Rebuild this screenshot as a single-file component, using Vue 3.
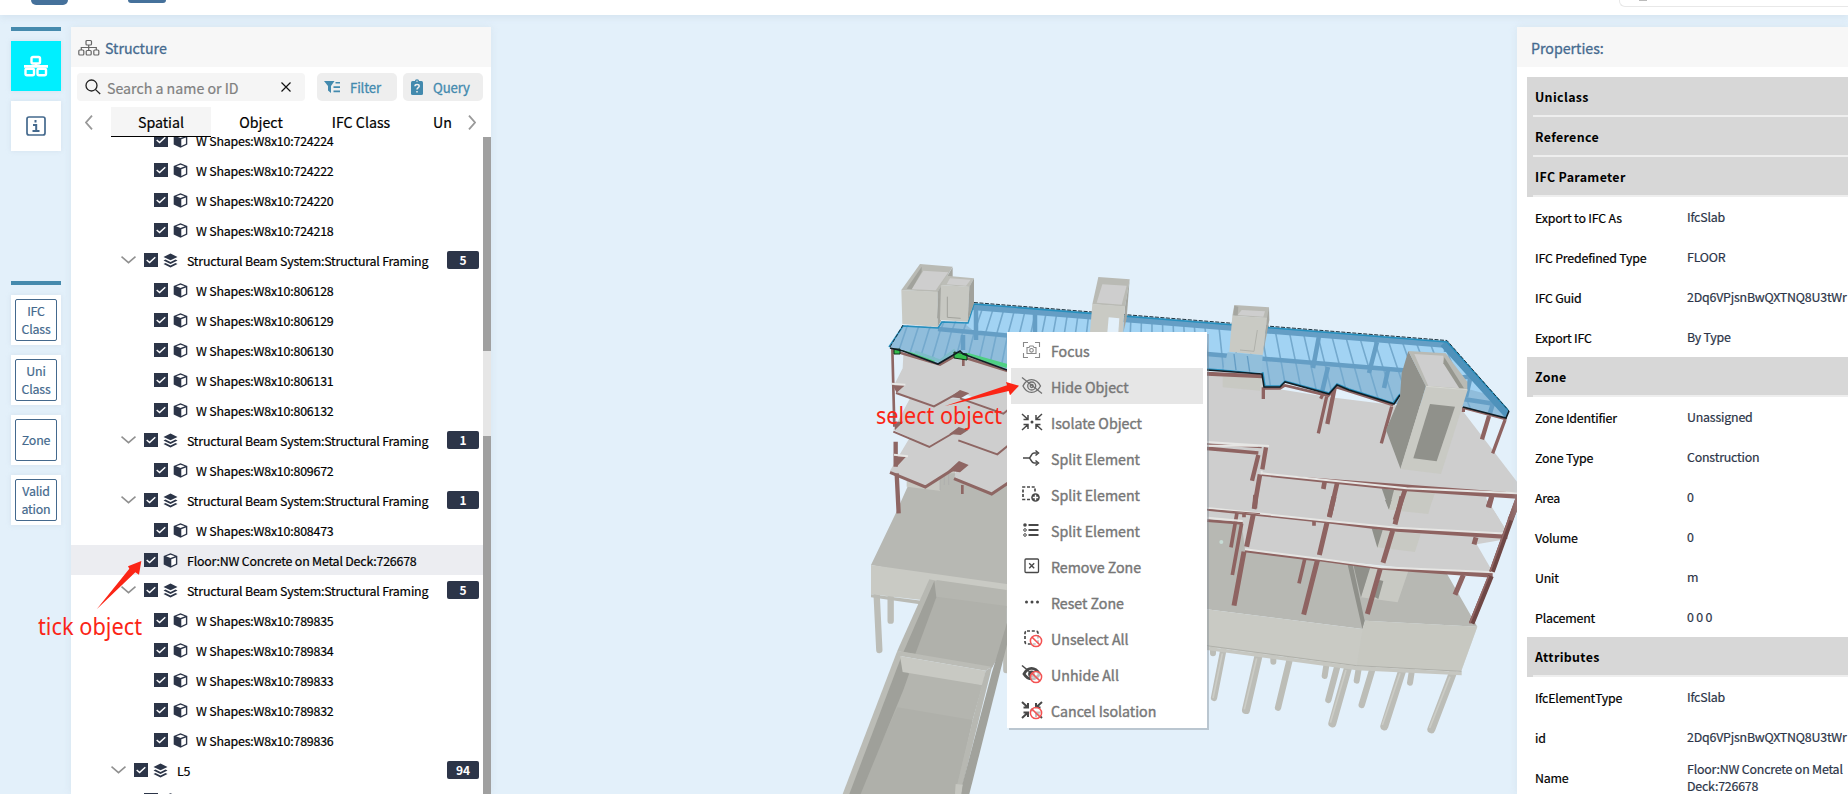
<script setup>
const leaf = (name) => ({ name: 'W Shapes:W8x10:' + name, kind: 'leaf' })
const beam = (count) => ({ name: 'Structural Beam System:Structural Framing', kind: 'group', count })
const rows = [
  leaf('724224'), leaf('724222'), leaf('724220'), leaf('724218'),
  beam(5), leaf('806128'), leaf('806129'), leaf('806130'), leaf('806131'), leaf('806132'),
  beam(1), leaf('809672'),
  beam(1), leaf('808473'),
  { name: 'Floor:NW Concrete on Metal Deck:726678', kind: 'floor' },
  beam(5), leaf('789835'), leaf('789834'), leaf('789833'), leaf('789832'), leaf('789836'),
  { name: 'L5', kind: 'storey', count: 94 },
  { name: '', kind: 'floor plain' },
]
const props = [
  ['Uniclass'], ['Reference'], ['IFC Parameter'],
  ['Export to IFC As', 'IfcSlab'], ['IFC Predefined Type', 'FLOOR'],
  ['IFC Guid', '2Dq6VPjsnBwQXTNQ8U3tWr'], ['Export IFC', 'By Type'],
  ['Zone'],
  ['Zone Identifier', 'Unassigned'], ['Zone Type', 'Construction'], ['Area', '0'],
  ['Volume', '0'], ['Unit', 'm'], ['Placement', '0 0 0'],
  ['Attributes'],
  ['IfcElementType', 'IfcSlab'], ['id', '2Dq6VPjsnBwQXTNQ8U3tWr'],
  ['Name', 'Floor:NW Concrete on Metal Deck:726678'],
]
const menu = [
  ['focus', 'Focus'], ['hide', 'Hide Object'], ['isolate', 'Isolate Object'],
  ['fork', 'Split Element'], ['add', 'Split Element'], ['list', 'Split Element'],
  ['remove', 'Remove Zone'], ['dots', 'Reset Zone'], ['unselect', 'Unselect All'],
  ['unhide', 'Unhide All'], ['cancel', 'Cancel Isolation'],
]
const tools = [['IFC', 'Class'], ['Uni', 'Class'], ['Zone'], ['Valid', 'ation']]

// roof joists fan out from left-leaning to right-leaning
const joists = []
for (let x = 900; x < 1450; x += x < 1200 ? 10.5 : 14) {
  const top = 303 + (x - 974) * 0.079
  const mid = 331 + (x - 950) * 0.109
  const lean = -12 + (x - 960) * 0.062
  joists.push([x, top, x + lean, mid, x + lean * 1.8, mid + 34])
}
</script>

<template>
  <div class="page">
    <svg class="scene" viewBox="0 0 1848 794" width="1848" height="794">
      <defs>
        <clipPath id="roofClip">
          <path d="M890 347 903 325 938 327 941 321 968 322 974 303 1447 341 1509 411 1506 418 1463 407 1394 404 1349 390 1337 385 1329 394 1285 382 1280 387 1264 387 1262 374 1207 370 1020 375 1007 370 963 354 960 351 938 364 903 351Z" />
        </clipPath>
      </defs>

      <!-- podium and ramp -->
      <g transform="translate(840 500) scale(.33333)">
        <path fill="none" stroke="#bcbdb7" stroke-width="19" stroke-linecap="round" d="M152 290V362M110 285 118 450M499 380V510" />
        <path fill="#b7b8b3" d="M93 195 168 38 205-45H560V270H500Z" />
        <path fill="#c9cac4" d="M93 195 500 252 560 260V330L245 300 93 283Z" />
        <path fill="#babbb5" d="M93 283 245 302 240 313 93 292Z" />
        <path fill="#b5b6b0" d="M290 240 500 270V420L455 505 190 460Z" />
        <path fill="#b0b1ab" d="M290 290 500 318V420L455 505 205 460Z" />
        <path fill="#b7b8b2" d="M268 238 290 242 226 462 185 456 172 452Z" />
        <path fill="#9fa09a" d="M283 242 289 292 226 462 190 457Z" />
        <path fill="#b4b5af" d="M188 510 428 554 398 660 350 882H55Z" />
        <path fill="#afb0aa" d="M172 622 398 660 345 882H55Z" />
        <path fill="#9fa09a" d="M180 468 207 522 190 570 62 882H25Z" />
        <path fill="#bbbcb6" d="M172 452 185 467 28 882H8Z" />
        <path fill="#bbbcb6" d="M172 452 455 500 437 512 180 468Z" />
        <path fill="#c8c9c3" d="M180 468 437 512 428 556 188 516Z" />
        <path fill="#b7b8b2" d="M437 512 456 500 368 855 362 882H345L398 660Z" />
        <path fill="#a1a29c" d="M502 365V430L388 882H362L368 850 455 520Z" />
        <path fill="#c5c6c0" d="M347 852 368 854 364 882H345Z" />
      </g>

      <!-- left wing floors -->
      <g transform="translate(840 240) scale(.33333)">
        <path fill="#c8c9c3" d="M200 690H345V755L298 752 200 740Z" />
        <path fill="#b7b8b3" d="M300 700H510V770H300Z" />
        <path stroke="#aaa" stroke-width="2" d="M300 695V750M313 695V735M326 690V735" />
        <path fill="#cecece" d="M205 600 150 692 256 740 350 680 343 715 455 762 510 725V560H250Z" />
        <path fill="#cecece" d="M210 475 160 570 268 620 350 575 358 600 472 641 510 612V475Z" />
        <path fill="#cecece" d="M190 345 188 385 165 430 170 458 282 498 365 455 490 520 510 508V345Z" />
        <path fill="#8e6663" d="M330 472 360 450 388 460 362 475ZM328 582 356 561 385 570 362 585ZM325 692 357 663 386 675 360 697ZM158 436 195 436 170 458ZM163 545 190 545 165 570ZM163 648 198 650 170 680Z" />
        <path fill="none" stroke="#8e6663" stroke-width="6" d="M168 459 282 499 362 455M360 475 490 521 510 505M160 575 268 621 355 570M355 601 472 643 510 612" />
        <path fill="none" stroke="#8e6663" stroke-width="9" d="M150 697 256 741 360 675M342 716 455 762 510 725" />
        <path fill="none" stroke="#8e6663" stroke-width="8" d="M157 325 163 560M370 350V378M367 735V762" />
        <path fill="none" stroke="#8e6663" stroke-width="13" d="M167 605V680M170 700 176 820" />
        <path fill="none" stroke="#e6e6e4" stroke-width="6" d="M155 431 196 434M162 644 204 649" />
        <path fill="none" stroke="#8e6663" stroke-width="8" d="M160 332 300 374 355 342M380 355 510 395" />
      </g>

      <!-- right wing floors -->
      <g transform="translate(1180 280) scale(.33333)">
        <path fill="#cecece" d="M75 285H250V320L440 350 640 375 850 395 1011 605V645L960 720 985 758 940 875 245 820 75 730Z" />
        <path fill="#c8c9c3" d="M128 285H245L240 332 128 322Z" />
        <path fill="#e3f0fa" d="M1011 650H918L960 720 985 758 1011 700Z" />
        <path fill="#c8c9c3" d="M632 628 765 640 742 702 625 690Z" />
        <path fill="#8f908a" d="M605 625 642 630 627 688Z" />
      </g>
      <g transform="translate(1190 500) scale(.33333)">
        <path fill="none" stroke="#bcbdb7" stroke-width="18" stroke-linecap="round" d="M69 440V460M250 460V485M410 490 404 528M507 500 500 542M666 510 660 548" />
        <path fill="none" stroke="#bcbdb7" stroke-width="19" stroke-linecap="round" d="M100 450 72 594M300 475 264 623M443 495 415 600M548 505 515 615" />
        <path fill="none" stroke="#bcbdb7" stroke-width="24" stroke-linecap="round" d="M206 465 168 630M475 500 427 670M637 510 583 679M788 520 724 688" />
        <path fill="none" stroke="#cbccc6" stroke-width="5" d="M97 460 69 594M200 475 163 628M468 510 421 668M630 520 577 675M780 530 719 684" />
        <path fill="#cecece" d="M50 30H888L955 98 860 130 912 217 760 215 165 155 50 60Z" />
        <path fill="#e3f0fa" d="M888-5 955 95 981 30V-5ZM860 133 948 118 908 215Z" />
        <path fill="#b7b8b3" d="M50 65 155 70 165 150 575 205 770 220 862 380 525 362 518 387 50 328Z" />
        <path fill="#c9cac4" d="M50 328 518 387 525 362 862 380 813 515 500 500 50 440Z" />
        <path fill="#c5c6c0" d="M518 387 525 362 862 380 813 515 500 498Z" opacity=".55" />
        <path fill="none" stroke="#b0b1ab" stroke-width="3" d="M50 437 500 497 815 514" />
        <path fill="#c6c7c1" d="M50 440 500 499 815 516V526L500 511 50 450Z" />
        <path fill="#c8c9c3" d="M575 90 692 102 675 156 560 142ZM540 200 655 213 623 307 513 292ZM640-5H727L715 42 622 32Z" />
        <path fill="#8f908a" d="M545 85 578 90 562 143ZM490 194 541 202 513 292ZM568 240 580 243 565 297 552 290ZM472 190 488 194 524 362 517 387ZM585 0H605L596 28Z" />
        <circle cx="94" cy="126" r="6" fill="#c7dcd5" />
        <g fill="none" stroke="#8e6361">
          <path stroke-width="15" d="M197-15 194 25M190 42 170 140M162 155 132 317M432-10 418 50M411 68 388 165M382 182 341 344M636-10 615 73M608 92 579 188M571 205 532 342" />
          <path stroke-width="11" d="M141 38 123 142M155 70 127 225M344 178 327 250M372 62V77M162 38V52M900 0 893 20" />
          <path stroke-width="15" d="M820 225 795 284M858 112 852 133" />
          <path stroke-width="7" d="M52 29 410 66" /><path stroke-width="8" d="M165 153 390 181M52 62 158 70" />
        </g>
        <path fill="#8e6361" d="M408 63 620 84 952 101V117L620 95 410 70ZM388 178 575 201 908 217V233L575 209 388 184Z" />
        <path fill="none" stroke="#e5e5e3" stroke-width="6" d="M52 24 410 62 620 83 957 101M165 148 388 176 575 202 912 217M52 53 158 63" />
        <path stroke="#6f4745" stroke-width="17" d="M985-5 906 215M903 228 845 370" /><path stroke="#946866" stroke-width="5" d="M979-5 900 215M896 228 839 370" />
      </g>
      <g transform="translate(1180 280) scale(.33333)">
        <g fill="none" stroke="#8e6361">
          <path stroke-width="12" d="M80 281 248 289" />
          <path stroke-width="8" d="M252 325H300L315 316 445 347 470 322 508 334 640 376M850 383 980 418" />
          <path stroke-width="10" d="M250 322V357M440 350 415 460M635 380 604 490M430 340 422 356M975 420 938 520M850 380V396" />
          <path stroke-width="13" d="M463 328 442 432M927 408 906 478M235 525 216 602M258 502 247 568" />
          <path stroke-width="14" d="M240 583 222 687M472 607 448 712M675 630 645 720M434 605 430 627" />
          <path stroke-width="16" d="M935 650 926 683M1020 655 990 720" />
          <path stroke-width="4" d="M80 492 245 503" /><path stroke-width="11" d="M80 505 235 519" />
        </g>
        <path fill="#8e6361" d="M245 582 1011 638V656L680 634 245 588Z" />
        <path fill="none" stroke="#e6e6e4" stroke-width="6" d="M80 486 267 498M245 572V580L680 625 1011 640M82 497H234" />
        <path stroke="#8e6361" stroke-width="3" d="M80 688 240 701" />
      </g>

      <!-- selected roof deck -->
      <g clip-path="url(#roofClip)">
        <path fill="#90bddb" d="M880 290H1520V430H880Z" />
        <path fill="#a2d3f3" d="M972 303 1447 341 1490 395 1410 373 975 332 960 320Z" />
        <path v-for="(j, i) in joists" :key="i" fill="none" stroke="#74a9cd" stroke-width="1.6" :d="`M${j[0]} ${j[1]} ${j[2]} ${j[3]} ${j[4]} ${j[5]}`" />
        <g fill="none" stroke="#659ec5">
          <path stroke-width="6" d="M972 307 1447 345" />
          <path stroke-width="4.500" d="M938 329 1207 354 1412 371M1463 399 1502 405M976 305V340M1035 312V335M963 335V350" />
          <path stroke-width="4.500" d="M1319 336 1313 368M1377 342 1369 373M1328 367 1322 392M1388 370 1384 388M1471 375 1466 397M1494 400 1490 413M1446 342V352M1455 378 1477 376" />
          <path stroke="#4f92bb" stroke-width="12" d="M1445 342 1510 414" />
        </g>
        <path fill="none" stroke="#4fcf83" stroke-width="4" d="M892 350 905 353 935 360M960 355H968L1007 366" />
        <path fill="none" stroke="#7dbcc9" stroke-width="3" d="M915 352 940 361 955 350" />
      </g>
      <path fill="#35bd4e" stroke="#102e18" stroke-width="1" d="M894 349H900V354H894ZM954 352 967 354V360L954 358Z" />
      <path fill="none" stroke="#268fbd" stroke-width="1.500" d="M889 347 903 326 938 328 942 322 968 323 974 304 1447 342 1508 410M1400 394 1393 403 1349 389 1337 384 1329 393 1285 381 1280 386 1265 386 1263 373 1207 369" />
      <path fill="none" stroke="#1c3440" stroke-width="1" stroke-dasharray="4 1.500" d="M890 347 903 325M974 302.500 1447 340.500 1509 411" />
      <path fill="none" stroke="#101d24" stroke-width="1.600" d="M1509 411 1506 418 1463 407M1400 395 1394 404 1349 390 1337 385 1329 394 1285 382 1280 387 1264 387 1262 374 1207 370M1007 370 963 354 960 351 938 364 903 351 890 348" />

      <!-- roof cores -->
      <g transform="translate(840 240) scale(.33333)">
        <path fill="#b9bab4" d="M184 150 240 72 338 80 293 157Z" /><path fill="#cecece" d="M215 148 250 92 325 97 287 151Z" /><path fill="#a1a29c" d="M200 146 245 80V96L215 148Z" />
        <path fill="#c9cac4" d="M184 150 293 155V261L187 252Z" /><path fill="#a5a6a0" d="M293 155 338 82V115L303 135V242L293 261Z" />
        <path fill="#bcbdb7" d="M303 135 320 107 402 115 388 141Z" /><path fill="#cecece" d="M320 133 330 115 392 119 378 137Z" />
        <path fill="#c7c8c2" d="M303 135 388 140 383 245 300 240Z" /><path fill="#a1a29c" d="M388 140 402 115V190L383 245Z" />
        <path fill="none" stroke="#a1a29c" stroke-width="3" d="M322 170V232L362 235M297 175 293 235" />
        <path fill="#b9bab4" d="M757 193 775 111 869 118 855 200Z" /><path fill="#cecece" d="M770 188 787 133 860 137 845 194Z" />
        <path fill="#c9cac4" d="M757 192 855 199 848 278H750Z" /><path fill="#a5a6a0" d="M855 200 869 118 860 235 850 278Z" /><path fill="#e3f0fa" d="M806 232 838 235 835 278H802Z" />
      </g>
      <g transform="translate(1180 280) scale(.33333)">
        <path fill="#92bfdb" d="M143 217 248 225 245 280 130 268Z" /><path stroke="#659dc4" stroke-width="4" d="M162 222 168 270M202 228 209 275" />
        <path fill="#b9bab4" d="M157 107 163 75 267 82 265 115Z" /><path fill="#cecece" d="M173 105 185 90 255 94 250 110Z" />
        <path fill="#c9cac4" d="M157 107 262 113 248 225 148 215Z" /><path fill="#a5a6a0" d="M261 114 267 82 268 120 249 223ZM163 77 175 80 173 106 160 106Z" />
        <path fill="none" stroke="#b0b1ab" stroke-width="3" d="M232 150 222 214 180 210" />
        <path fill="#90918b" d="M685 213 738 318 662 568 618 450 660 350 665 280Z" />
        <path fill="#b9bab4" d="M685 213 797 220 862 305V330L738 320Z" /><path fill="#cecece" d="M703 222 790 227V245L840 325 745 318Z" /><path fill="#96978f" d="M793 232 852 325 838 325 790 250Z" />
        <path fill="#c9cac4" d="M738 318 863 330 783 582 661 567Z" /><path fill="#90918b" d="M750 372 825 380 770 544 700 535Z" />
        <path fill="none" stroke="#d7d8d2" stroke-width="3" d="M738 319 862 329" />
      </g>
    </svg>

    <header class="top">
      <i class="logo"></i><i class="mark"></i><i class="field"></i>
    </header>

    <main class="body">
      <nav class="rail">
        <i class="bar"></i>
        <div class="tile on">
          <svg width="26" height="22" viewBox="0 0 26 22" fill="none" stroke="#fff" stroke-width="2.400"><rect x="8.500" y="2" width="8.500" height="6.500" rx="1.500" /><path stroke-width="2.600" d="M1 11.400h24M13 8v3" /><rect x="2.500" y="13.800" width="8.500" height="6.500" rx="1.500" /><rect x="14.500" y="13.800" width="8.500" height="6.500" rx="1.500" /></svg>
        </div>
        <div class="tile">
          <svg width="20" height="20" viewBox="0 0 20 20" fill="none" stroke="#44698d"><rect x="1" y="1" width="18" height="18" rx="2" stroke-width="1.700" /><path stroke-width="2" d="M9.500 4v2.600M7 9h3.200v6M6.500 15h7" /></svg>
        </div>
        <i class="bar second"></i>
        <div v-for="t in tools" :key="t[0]" class="tile"><div class="box"><span v-for="w in t" :key="w">{{ w }}</span></div></div>
      </nav>

      <section class="tree">
        <h2>
          <svg width="22" height="18" viewBox="0 0 22 18" fill="none" stroke="#666" stroke-width="1.200"><rect x="8" y="1.500" width="5.500" height="4.500" rx="1" /><path d="M10.700 6v6M3.300 11V8.500h15V11" /><rect x=".8" y="11" width="5" height="5" rx="1" /><rect x="8.200" y="11.500" width="5" height="4.500" rx="1" /><rect x="15.800" y="11" width="5" height="5" rx="1" /></svg>
          <span>Structure</span>
        </h2>
        <div class="controls">
          <div class="search">
            <svg width="16" height="16" viewBox="0 0 16 16" fill="none" stroke="#222" stroke-width="1.300"><circle cx="6.500" cy="6.500" r="5.500" /><path d="m10.600 10.600 4.600 4.400" /></svg>
            <span>Search a name or ID</span>
            <svg class="x" width="10" height="10" viewBox="0 0 10 10" stroke="#111" stroke-width="1.200"><path d="m.5.500 9 9M9.500.500l-9 9" /></svg>
          </div>
          <div class="btn filter">
            <svg width="16" height="14" viewBox="0 0 16 14" fill="#438aae"><path d="M0 1h10.500L7 6v7L4 10.500V6Z" /><path d="M11.500 2H16v1.600h-4.500zM9.500 6.300H16v1.600H9.500zM9.500 10.600H16v1.600H9.500z" /></svg>
            <span>Filter</span>
          </div>
          <div class="btn query">
            <svg width="12" height="16" viewBox="0 0 12 16"><rect y="2" width="12" height="14" rx="1.500" fill="#438aae" /><circle cx="6" cy="2.400" r="2.200" fill="#438aae" /><circle cx="6" cy="2.300" r=".7" fill="#eee" /><path fill="none" stroke="#eee" stroke-width="1.500" d="M4 7.200C4 5 8.200 5 8.200 7.200 8.200 8.700 6 8.600 6 10.500M6 12v1.500" /></svg>
            <span>Query</span>
          </div>
        </div>
        <div class="tabs">
          <svg class="prev" width="8" height="15" viewBox="0 0 8 15" fill="none" stroke="#999" stroke-width="1.800"><path d="M7 .7 1 7.500l6 6.800" /></svg>
          <span class="tab active">Spatial</span><span class="tab">Object</span><span class="tab">IFC Class</span><span class="tab cut">Un</span>
          <svg class="next" width="8" height="15" viewBox="0 0 8 15" fill="none" stroke="#999" stroke-width="1.800"><path d="m1 .7 6 6.800-6 6.800" /></svg>
        </div>
        <div class="list">
          <div class="rows">
            <div v-for="(r, i) in rows" :key="i" class="row" :class="r.kind">
              <svg v-if="r.count" class="chev" width="15" height="8" viewBox="0 0 15 8" fill="none" stroke="#909090" stroke-width="1.600"><path d="m.5.700 7 6 7-6" /></svg>
              <svg class="check" width="14" height="14" viewBox="0 0 14 14"><path fill="#2c3548" d="M0 0h14v14H0z" /><path fill="none" stroke="#fff" stroke-width="1.500" d="m2.700 7 2.900 2.600 5.700-5.400" /></svg>
              <svg v-if="r.count" class="ico" width="15" height="15" viewBox="0 0 15 15" fill="#2c3548"><path d="M7.500.5 14.500 4l-7 3.300L.5 4Z" /><path d="m.5 7.500 2-1 5 2.400 5-2.400 2 1-7 3.400Z" /><path d="m.5 11 2-1 5 2.400 5-2.400 2 1-7 3.500Z" /></svg>
              <svg v-else class="ico" width="15" height="15" viewBox="0 0 15 15"><path fill="#2c3548" d="M7.500.3 14.300 3v8.500l-6.800 3.200L.7 11.500V3Z" /><path fill="#fff" d="M7.500 1.700 11.900 3.300 7.500 5 3.100 3.300ZM8.300 6.200 12.900 4.500v6.300l-4.600 2.100Z" /></svg>
              <span class="name">{{ r.name }}</span>
              <b v-if="r.count" class="badge">{{ r.count }}</b>
            </div>
          </div>
          <div class="scroll"><i></i></div>
        </div>
      </section>

      <section class="props">
        <h2>Properties:</h2>
        <div class="table">
          <div v-for="(p, i) in props" :key="i" :class="p.length > 1 ? 'prop' : 'head'">
            <span class="key">{{ p[0] }}</span><span v-if="p.length > 1" class="val">{{ p[1] }}</span>
          </div>
        </div>
      </section>
    </main>

    <div class="menu">
      <div v-for="m in menu" :key="m[0]" class="item" :class="{ hover: m[0] === 'hide' }">
        <svg width="24" height="22" viewBox="0 0 24 22" fill="none" stroke="#484848" stroke-width="1.400">
          <g v-if="m[0] === 'focus'" stroke="#888" stroke-width="1.100"><path d="M3.500 8V3.500H8M15 3.500h4.500V8M3.500 14v4.500H8M15 18.500h4.500V14M7 8.500h2l1-1.500h3l1 1.500h2v6H7z" /><circle cx="11.500" cy="11.300" r="1.800" /></g>
          <g v-else-if="m[0] === 'hide'" stroke="#707070" stroke-width="1.300"><path d="M3 11C7 2.500 16 2.500 20.500 11 16 19.500 7 19.500 3 11Z" /><circle cx="11.700" cy="11" r="4" /><circle cx="11.700" cy="11" r="1.500" /><path d="m2 2.500 20 16" /></g>
          <g v-else-if="m[0] === 'isolate' || m[0] === 'cancel'" :stroke-width="m[0] === 'cancel' ? 2 : 1.500"><path d="m2 3 6 5.500M3.500 8.500H8V4M22 3l-6 5.500M20.500 8.500H16V4M2 19l6-5.500M3.500 13.500H8V18M22 19l-6-5.500M20.500 13.500H16V18" /><circle cx="12" cy="11" r="1.500" fill="#484848" stroke="none" /></g>
          <g v-else-if="m[0] === 'fork'" stroke-width="1.500"><path d="M3 11h6c2 0 2-5 5-5h3M9 11c2 0 2 5 5 5h3" /><path d="m15.500 3.500 3 2.500-3 2.500M15.500 13.500l3 2.500-3 2.500" /></g>
          <g v-else-if="m[0] === 'add'"><path stroke-width="1.700" stroke-dasharray="3 1.700" d="M10 16.500H3V4h12v5" /><circle cx="15.500" cy="14.500" r="4.300" fill="#484848" stroke="none" /><path stroke="#fff" d="M12.800 14.500h5.400M15.500 11.800v5.400" /></g>
          <g v-else-if="m[0] === 'list'"><path stroke-width="1.800" d="M8.500 6h10M8.500 11h10M8.500 16h10" /><circle cx="5" cy="6" r="1.800" fill="#484848" stroke="none" /><circle cx="5" cy="11" r="1.300" stroke-width="1" /><circle cx="5" cy="16" r="1.300" stroke-width="1" /></g>
          <g v-else-if="m[0] === 'remove'"><rect x="5" y="4" width="13.500" height="13.500" rx="1" stroke-width="1.300" /><path d="m9.200 8.200 5 5M14.200 8.200l-5 5" /></g>
          <g v-else-if="m[0] === 'dots'" fill="#484848" stroke="none"><circle cx="6.500" cy="11" r="1.500" /><circle cx="12" cy="11" r="1.500" /><circle cx="17.500" cy="11" r="1.500" /></g>
          <rect v-else-if="m[0] === 'unselect'" x="5" y="4" width="13" height="13" rx="2" stroke-width="1.700" stroke-dasharray="3 1.800" />
          <g v-else stroke-width="2.800"><path d="M4 11C8 3.500 15 3.500 19.500 11 16 17.500 8 17.500 4 11Z" /><circle cx="11.500" cy="11" r="2" fill="#484848" /><path stroke-width="1.500" d="m2 2.500 18 15" /></g>
          <g v-if="['unselect', 'unhide', 'cancel'].includes(m[0])" stroke="#f45252" stroke-width="1.500"><circle cx="16" cy="14" r="5.600" fill="#fff" fill-opacity=".65" /><path d="m12 10.100 8 7.900" /></g>
        </svg>
        <span>{{ m[1] }}</span>
      </div>
    </div>

    <svg class="notes" viewBox="0 0 1848 794" width="1848" height="794" fill="#fb2516">
      <path transform="translate(0 524) scale(.33333)" d="M290 256 388 134 384 127 424 111 417 152 406 145Z" />
      <path transform="translate(840 240) scale(.33333)" d="M315 498 501 436 498 426 537 437 510 466 506 453Z" />
      <text x="38" y="635" textLength="104" lengthAdjust="spacingAndGlyphs">tick object</text>
      <text x="876" y="424" textLength="126" lengthAdjust="spacingAndGlyphs">select object</text>
    </svg>
  </div>
</template>

<style>
body { overflow: hidden; }
</style>
<style scoped>
.page { position: relative; width: 1848px; height: 794px; overflow: hidden; background: #e3f0fa; font-family: "Noto Sans CJK SC", "Noto Sans", sans-serif; font-size: 12.400px; letter-spacing: -.2px; line-height: 18px; color: #000; -webkit-text-stroke: .2px; }
svg { flex: none; display: block; }
.scene, .notes { position: absolute; inset: 0; }
.notes { font: 23.500px "Noto Sans", sans-serif; letter-spacing: 0; -webkit-text-stroke: 0; pointer-events: none; }
.top { position: relative; display: flex; height: 15px; background: #fff; box-shadow: 0 3px 6px #bdd0dd55; }
.top i { flex: none; }
.logo { width: 37px; height: 5px; margin-left: 31px; border-radius: 0 0 7px 7px; background: #45719b; }
.mark { width: 38px; height: 3px; margin-left: 60px; border-radius: 0 0 6px 6px; background: #45719b; }
.field { width: 240px; height: 6px; margin-left: 1453px; border: solid #e8e8e8; border-width: 0 0 1.500px 1.500px; border-radius: 0 0 0 6px; background: linear-gradient(#bbb, #bbb) 19px 0 / 8px 1px no-repeat; }
.body { position: relative; display: flex; align-items: flex-start; padding: 12px 0 0 11px; }
.rail { width: 50px; margin-right: 10px; color: #44698d; }
.bar { display: block; height: 4px; background: #468aad; margin-bottom: 10px; }
.second { margin-top: 130px; }
.tile { display: flex; align-items: center; justify-content: center; width: 50px; height: 50px; margin-bottom: 10px; background: #fff; box-shadow: 0 0 5px #becedb66; }
.tile.on { background: #00efff; }
.box { box-sizing: border-box; width: 42px; height: 42px; display: flex; flex-direction: column; align-items: center; justify-content: center; border: 1px solid #44698d; border-radius: 2px; line-height: 17.500px; padding-top: 1px; }
.tree { width: 420px; height: 767px; background: #fff; box-shadow: 0 0 8px #bdd0dd55; }
h2 { box-sizing: border-box; margin: 0; height: 40px; display: flex; align-items: center; background: #f7f7f7; color: #456a8f; font-size: 14.200px; letter-spacing: 0; font-weight: 400; padding-top: 1px; -webkit-text-stroke: .3px; }
.tree h2 { padding-left: 7px; gap: 5px; }
.controls { display: flex; height: 28px; padding: 6px 8px 0 6px; }
.search { display: flex; align-items: center; width: 228px; box-sizing: border-box; padding: 0 14px 0 8px; border-radius: 4px; background: #f5f5f5; color: #808080; font-size: 14.200px; letter-spacing: 0; gap: 6px; }
.controls span { padding-top: 1px; }
.search .x { margin-left: auto; }
.btn { display: flex; align-items: center; box-sizing: border-box; width: 80px; border-radius: 5px; background: #eee; color: #438aae; font-size: 13.200px; letter-spacing: -.15px; -webkit-text-stroke: .3px; }
.filter { margin-left: 12px; padding-left: 7px; gap: 10px; }
.query { margin-left: 6px; padding-left: 8px; gap: 10px; }
.tabs { display: flex; height: 30px; margin-top: 6px; padding-left: 14px; font-size: 14.200px; letter-spacing: 0; align-items: center; }
.prev { margin-right: 18px; }
.tab { box-sizing: border-box; width: 100px; height: 30px; text-align: center; line-height: 31px; border-bottom: 1px solid transparent; }
.active { background: #f5f5f5; border-color: #000; }
.cut { width: 57px; text-align: left; padding-left: 22px; }
.list { display: flex; height: 657px; overflow: hidden; }
.rows { width: 412px; margin-top: -12px; }
.row { display: flex; align-items: center; box-sizing: border-box; height: 30px; padding-left: 83px; padding-right: 4px; }
.group { padding-left: 50px; }
.storey { padding-left: 40px; }
.leaf .name { margin-left: 8px; }
.floor { padding-left: 73px; background: #ecedf1; }
.plain { background: none; }
.chev { margin-right: 8px; }
.ico { margin-left: 5px; }
.name { margin-left: 9px; padding-top: 1px; white-space: nowrap; }
.badge { flex: none; margin-left: auto; width: 32px; height: 18px; border-radius: 2px; background: #2c3548; color: #fff; font-size: 12px; letter-spacing: 0; text-align: center; -webkit-text-stroke: 0; }
.scroll { width: 8px; background: #a0a0a0; padding-top: 214px; box-sizing: border-box; }
.scroll i { display: block; height: 85px; background: #e6e6e6; }
.props { width: 331px; height: 767px; margin-left: auto; background: #fff; box-shadow: 0 0 8px #bdd0dd55; overflow: hidden; }
.props h2 { padding-left: 14px; }
.table { padding: 10px 0 0 10px; }
.head { height: 40px; box-sizing: border-box; line-height: 41px; padding-left: 8px; font-weight: 700; letter-spacing: .35px; background: linear-gradient(#eee, #eee) 6px 38px / 400px 2px no-repeat #d7d7d7; -webkit-text-stroke: 0; }
.prop { display: flex; align-items: center; height: 42px; margin-bottom: -2px; padding-left: 8px; }
.key { width: 152px; flex: none; }
.val { color: #2c3548; line-height: 17.500px; }
.menu { position: absolute; left: 1007px; top: 332px; width: 192px; padding: 0 4px; background: #fff; box-shadow: 2px 2px 0 #7d879266; color: #777; font-size: 14.200px; letter-spacing: 0; -webkit-text-stroke: .4px; }
.item { display: flex; align-items: center; height: 36px; padding-left: 9px; gap: 7px; white-space: nowrap; }
.item span { padding-top: 2px; }
.hover { background: #e6e6e6; }
</style>
